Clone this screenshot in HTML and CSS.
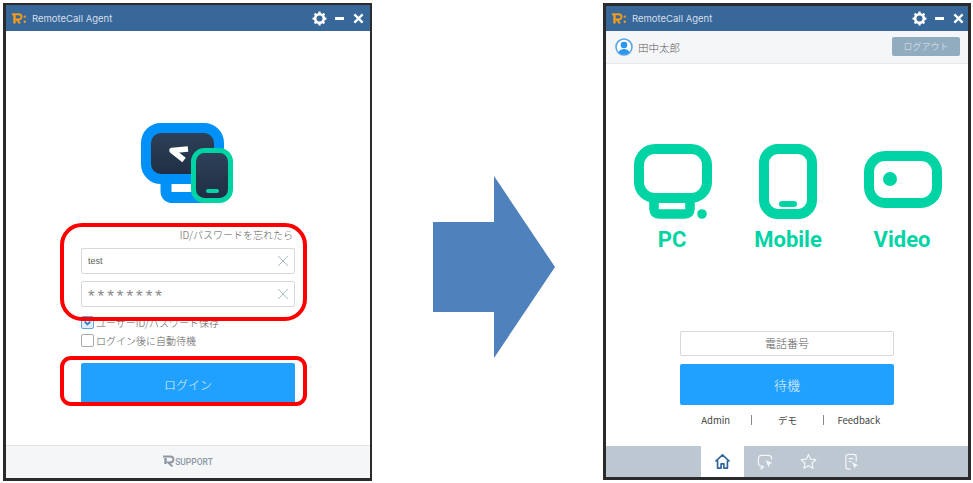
FILE: index.html
```html
<!doctype html>
<html>
    <head>
        <meta charset="utf-8">
        <title>RemoteCall Agent</title>
        <link rel="stylesheet" href="styles.css">
    </head>
    <body>
        <svg class="sprite" width="0" height="0">
            <symbol id="logo-r" viewBox="0 0 14 11">
                <path d="M0 1.200h6.500q3 0 3 2.600 0 2.600-3 2.600H4.500L8 10.500" fill="none" stroke="currentColor" stroke-width="2"/>
                <path d="M2.500 2v8.500" stroke="currentColor" stroke-width="2.400"/>
                <circle cx="12.800" cy="3.600" r="1.200" fill="currentColor"/>
                <circle cx="12.800" cy="8.800" r="1.200" fill="currentColor"/>
            </symbol>
            <symbol id="logo-mark" viewBox="0 0 12 12">
                <path d="M0 1.500h7q3.500 0 3.500 3t-3.500 3H5l4.500 4" fill="none" stroke="currentColor" stroke-width="1.800"/>
                <path d="M2.500 3v6" stroke="currentColor" stroke-width="2.400"/>
            </symbol>
            <symbol id="gear" viewBox="0 0 16 16">
                <circle cx="8" cy="8" r="4.600" fill="none" stroke="currentColor" stroke-width="2.800"/>
                <path d="M8 .6v14.800M.6 8h14.800M2.800 2.800l10.400 10.400M13.200 2.800 2.800 13.200" stroke="currentColor" stroke-width="2.400" stroke-dasharray="3 8.800"/>
            </symbol>
            <symbol id="cross" viewBox="0 0 12 12">
                <path d="M1.500 1.500l9 9M10.500 1.500l-9 9" fill="none" stroke="currentColor" stroke-width="2.600"/>
            </symbol>
            <symbol id="thin-cross" viewBox="0 0 12 12">
                <path d="M1 1l10 10M11 1 1 11" fill="none" stroke="currentColor" stroke-width="1"/>
            </symbol>
        </svg>

        <!-- login window -->
        <div class="window window-login">
            <div class="titlebar">
                <svg class="title-logo"><use href="#logo-r"/></svg>
                <span class="title-text">RemoteCall Agent</span>
                <svg class="btn-gear"><use href="#gear"/></svg>
                <span class="btn-min"></span>
                <svg class="btn-close"><use href="#cross"/></svg>
            </div>
            <div class="login">
                <svg class="app-logo" viewBox="0 0 92 80">
                    <defs>
                        <linearGradient id="screen" x1="0" y1="0" x2="0" y2="1">
                            <stop offset="0" stop-color="#2f4259"/>
                            <stop offset="1" stop-color="#1e2d43"/>
                        </linearGradient>
                    </defs>
                    <path d="M25 56v12q0 6.500 7 6.500h32" fill="none" stroke="#0091f8" stroke-width="11"/>
                    <rect x="5" y="5" width="73" height="51" rx="15" fill="url(#screen)" stroke="#0091f8" stroke-width="10"/>
                    <path d="M47 26 31 27.500 43 37" fill="none" stroke="#fff" stroke-width="5.500" stroke-linejoin="round"/>
                    <rect x="52.500" y="27.500" width="37" height="50" rx="11" fill="url(#screen)" stroke="#00d4a4" stroke-width="5"/>
                    <rect x="65" y="66" width="13" height="4" rx="2" fill="#00d4a4"/>
                </svg>
                <div class="forgot">ID/パスワードを忘れたら</div>
                <div class="field">
                    <span>test</span>
                    <svg class="field-clear"><use href="#thin-cross"/></svg>
                </div>
                <div class="field field-pass">
                    <span>********</span>
                    <svg class="field-clear"><use href="#thin-cross"/></svg>
                </div>
                <label class="check check-first">
                    <span class="box box-on">
                        <svg viewBox="0 0 12 12"><path d="M3 5l3 3 3-3" fill="none" stroke="#2f80c4" stroke-width="2"/></svg>
                    </span>
                    ユーザーID/パスワード保存
                </label>
                <label class="check">
                    <span class="box"></span>
                    ログイン後に自動待機
                </label>
                <div class="primary login-btn">ログイン</div>
            </div>
            <div class="footer">
                <svg class="footer-logo"><use href="#logo-mark"/></svg>
                <span>SUPPORT</span>
            </div>
            <div class="mark mark-fields"></div>
            <div class="mark mark-btn"></div>
        </div>

        <svg class="arrow" viewBox="0 0 122 182">
            <path d="M0 46h61V0l61 91-61 91v-46H0z" fill="#4f81bd"/>
        </svg>

        <!-- main window -->
        <div class="window window-main">
            <div class="titlebar">
                <svg class="title-logo"><use href="#logo-r"/></svg>
                <span class="title-text">RemoteCall Agent</span>
                <svg class="btn-gear"><use href="#gear"/></svg>
                <span class="btn-min"></span>
                <svg class="btn-close"><use href="#cross"/></svg>
            </div>
            <div class="userbar">
                <svg class="avatar" viewBox="0 0 18 18">
                    <circle cx="9" cy="9" r="8" fill="#fff" stroke="#5aa5e6" stroke-width="1.600"/>
                    <circle cx="9" cy="7" r="3.300" fill="#2b96ee"/>
                    <path d="M3.500 14.500q1-3.500 5.500-3.500t5.500 3.500q-2 2-5.500 2t-5.500-2z" fill="#2b96ee"/>
                </svg>
                <span class="username">田中太郎</span>
                <div class="logout">ログアウト</div>
            </div>
            <div class="content">
                <div class="modes">
                    <div class="mode">
                        <svg viewBox="0 0 80 75">
                            <path d="M22 58v7q0 5 5 5h26q5 0 5-5v-7" fill="none" stroke="#00d4a4" stroke-width="9.500"/>
                            <rect x="7" y="5" width="68" height="49" rx="16" fill="#fff" stroke="#00d4a4" stroke-width="10"/>
                            <circle cx="70" cy="70" r="4.800" fill="#00d4a4"/>
                        </svg>
                        <div class="mode-label">PC</div>
                    </div>
                    <div class="mode">
                        <svg viewBox="0 0 80 75">
                            <rect x="17" y="5" width="48" height="65" rx="14" fill="none" stroke="#00d4a4" stroke-width="10"/>
                            <rect x="32" y="57" width="18" height="6" rx="3" fill="#00d4a4"/>
                        </svg>
                        <div class="mode-label mode-label-mid">Mobile</div>
                    </div>
                    <div class="mode">
                        <svg viewBox="0 0 80 75">
                            <rect x="7" y="12" width="68" height="47" rx="16" fill="none" stroke="#00d4a4" stroke-width="10"/>
                            <circle cx="28" cy="35" r="7" fill="#00d4a4"/>
                        </svg>
                        <div class="mode-label">Video</div>
                    </div>
                </div>
                <div class="phone">電話番号</div>
                <div class="primary wait-btn">待機</div>
                <div class="links">
                    <span>Admin</span>
                    <span>デモ</span>
                    <span>Feedback</span>
                </div>
            </div>
            <div class="tabs">
                <div class="tab tab-active">
                    <svg viewBox="0 0 18 18"><path d="M1.500 9 9 2l7.500 7M3.800 8v8h3.700v-4.500h3V16h3.700V8" fill="none" stroke="#2f6699" stroke-width="1.800" stroke-linejoin="round"/></svg>
                </div>
                <div class="tab">
                    <svg viewBox="0 0 18 18">
                        <path d="M6 14H5q-3.500 0-3.500-3.500V6q0-3.500 3.500-3.500h7q3.500 0 3.500 3.500v1M4.500 14v3l3-3" fill="none" stroke="#f3f5f7" stroke-width="1.300"/>
                        <path d="M9 7.500l7.500 3-3 1.200-1.200 3.300z" fill="#f3f5f7"/>
                    </svg>
                </div>
                <div class="tab">
                    <svg viewBox="0 0 18 18"><path d="M9 1.500l2.300 5 5.400.6-4 3.700 1.100 5.400L9 13.500l-4.800 2.700 1.100-5.400-4-3.700 5.400-.6z" fill="none" stroke="#f3f5f7" stroke-width="1.300" stroke-linejoin="round"/></svg>
                </div>
                <div class="tab">
                    <svg viewBox="0 0 18 18">
                        <path d="M8 17H5.500Q3 17 3 14.500v-10Q3 1.500 5.500 1.500h6q2.500 0 2.500 3V9M6 6h5M6 9h3" fill="none" stroke="#f3f5f7" stroke-width="1.300"/>
                        <path d="M9.500 9.500l6.500 3.500-2.600 1-1 2.700z" fill="#f3f5f7"/>
                    </svg>
                </div>
            </div>
        </div>
    </body>
</html>
```

FILE: styles.css
```css
* {
    margin: 0;
    padding: 0;
    box-sizing: border-box;
}
body {
    display: flex;
    align-items: flex-start;
    padding: 3px 0 0 3px;
    background-color: #FFF;
    color: #5c5c5c;
    font-family: "Noto Sans CJK JP", "Noto Sans", sans-serif;
    overflow: hidden;
}
.sprite {
    position: absolute;
}

/* windows */
.window {
    position: relative;
    display: flex;
    flex-direction: column;
    flex: none;
    border: solid #2b2b2b;
    background-color: #FFF;
}
.window-login {
    width: 369px;
    height: 478px;
    border-width: 2px 2px 3px 3px;
}
.window-main {
    width: 368px;
    height: 477px;
    margin-left: 48px;
    border-width: 3px;
}
.arrow {
    flex: none;
    width: 122px;
    height: 182px;
    margin: 173px 0 0 61px;
}

/* title bar */
.titlebar {
    display: flex;
    align-items: center;
    flex: none;
    height: 26px;
    padding: 0 6px;
    background-color: #38679a;
    color: #FFF;
}
.window-main .titlebar {
    height: 25px;
    padding-right: 4px;
}
.title-logo {
    width: 14px;
    height: 11px;
    color: #f29b1d;
}
.title-text {
    margin-left: 6px;
    flex: 1;
    color: #d5dfe9;
    font-family: "Inter", sans-serif;
    font-size: 9.500px;
}
.btn-gear {
    width: 15px;
    height: 15px;
}
.btn-min {
    width: 9px;
    height: 3px;
    margin-left: 8px;
    background-color: #FFF;
}
.btn-close {
    width: 11px;
    height: 11px;
    margin-left: 9px;
}

/* login */
.login {
    flex: 1;
    padding: 92px 75px 0;
}
.app-logo {
    display: block;
    width: 92px;
    height: 80px;
    margin-left: 60px;
}
.forgot {
    margin: 24px 2px 5px 0;
    height: 16px;
    line-height: 16px;
    text-align: right;
    font-size: 10px;
    font-weight: 300;
}
.field {
    display: flex;
    align-items: center;
    justify-content: space-between;
    height: 26px;
    padding: 0 5px 0 6px;
    border: 1px solid #d8d8d8;
    border-radius: 2px;
    font-size: 9px;
    font-family: "Liberation Sans", sans-serif;
}
.field-pass {
    margin-top: 7px;
    color: #888;
    font-size: 17px;
    letter-spacing: 3px;
}
.field-pass span {
    padding-top: 5px;
}
.field-clear {
    width: 12px;
    height: 12px;
    color: #a9bfc0;
}
.check {
    display: flex;
    align-items: center;
    gap: 2px;
    height: 18px;
    font-size: 10px;
    font-weight: 300;
}
.check-first {
    margin-top: 6px;
}
.box {
    flex: none;
    width: 13px;
    height: 13px;
    border: 1px solid #aaa;
    border-radius: 2px;
}
.box-on {
    border-color: #62a8e0;
    background-color: #e3f0fb;
}
.box-on svg {
    display: block;
}
.primary {
    display: flex;
    align-items: center;
    justify-content: center;
    border-radius: 2px;
    background-color: #20a0ff;
    color: #e6f4ff;
    font-size: 13px;
    font-weight: 300;
}
.login-btn {
    height: 42px;
    margin-top: 14px;
    font-size: 12px;
}
.footer {
    display: flex;
    align-items: center;
    justify-content: center;
    flex: none;
    height: 33px;
    border-top: 1px solid #e3e6e9;
    background-color: #f5f6f8;
    color: #8b97a5;
    font-family: "Roboto", sans-serif;
    font-size: 8.500px;
    font-weight: 500;
}
.footer-logo {
    width: 12px;
    height: 12px;
    margin-bottom: 2px;
}

/* red callouts */
.mark {
    position: absolute;
    left: 54px;
    width: 247px;
    border: 4px solid #f00;
}
.mark-fields {
    top: 218px;
    height: 98px;
    border-radius: 22px;
}
.mark-btn {
    top: 351px;
    height: 50px;
    border-radius: 11px;
}

/* main */
.userbar {
    display: flex;
    align-items: center;
    flex: none;
    height: 33px;
    padding: 0 8px 0 9px;
    border-bottom: 1px solid #e6e8ea;
    background-color: #f5f6f8;
}
.avatar {
    width: 18px;
    height: 18px;
}
.username {
    flex: 1;
    margin-left: 5px;
    font-size: 10.500px;
    font-weight: 300;
}
.logout {
    width: 68px;
    height: 19px;
    line-height: 19px;
    margin-top: -1px;
    border-radius: 2px;
    background-color: #91abbf;
    color: #c9d6e0;
    text-align: center;
    font-size: 9px;
}
.content {
    display: flex;
    flex-direction: column;
    align-items: center;
    flex: 1;
}
.modes {
    display: grid;
    grid-template-columns: 80px 80px 80px;
    column-gap: 35px;
    align-self: flex-start;
    margin: 80px 0 0 26px;
}
.mode svg {
    display: block;
    width: 80px;
    height: 75px;
}
.mode-label {
    margin: 0 -10px;
    height: 36px;
    line-height: 42px;
    text-align: center;
    color: #00d4a4;
    font-family: "Roboto", sans-serif;
    font-size: 22px;
    font-weight: bold;
}
.mode-label-mid {
    margin: 0 -11px 0 -9px;
}
.phone {
    width: 214px;
    height: 25px;
    margin-top: 76px;
    line-height: 23px;
    border: 1px solid #d8d8d8;
    border-radius: 2px;
    text-align: center;
    font-size: 11px;
    font-weight: 300;
}
.wait-btn {
    width: 214px;
    height: 41px;
    margin-top: 8px;
}
.links {
    display: grid;
    grid-template-columns: repeat(3, 1fr);
    align-items: center;
    width: 214px;
    height: 14px;
    margin-top: 8px;
    text-align: center;
    color: #444;
    font-size: 9.500px;
}
.links span {
    height: 10px;
    line-height: 10px;
    border-left: 1px solid #888;
}
.links span:first-child {
    border-left: 0;
}
.tabs {
    display: flex;
    flex: none;
    height: 31px;
    padding-left: 95px;
    background-color: #bdc7d2;
}
.tab {
    display: flex;
    align-items: center;
    justify-content: center;
    width: 43px;
}
.tab-active {
    background-color: #FFF;
}
.tab svg {
    width: 17px;
    height: 17px;
}
```
